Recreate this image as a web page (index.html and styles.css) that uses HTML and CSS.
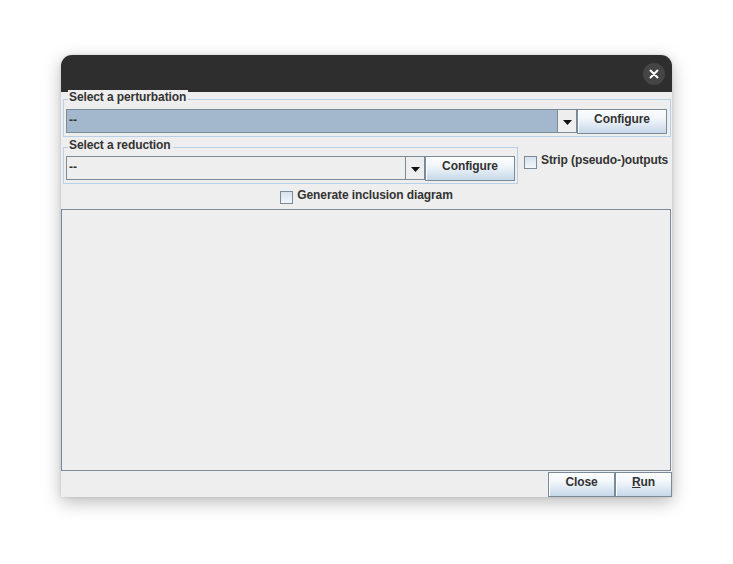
FILE: index.html
```html
<!DOCTYPE html>
<html>
<head>
<meta charset="utf-8">
<link rel="stylesheet" href="styles.css">
</head>
<body>
<div class="window">
  <div class="titlebar">
    <div class="close-btn">
      <svg width="10" height="10" viewBox="0 0 10 10"><path d="M1.5 1.5 L8.5 8.5 M8.5 1.5 L1.5 8.5" stroke="#ffffff" stroke-width="2" stroke-linecap="round"/></svg>
    </div>
  </div>
  <div class="content">
    <div class="group group-wide">
      <span class="group-title">Select a perturbation</span>
      <div class="combo-row">
        <div class="combo combo-selected">
          <span class="combo-value">--</span>
          <span class="combo-arrow"><svg width="9" height="5" viewBox="0 0 9 5"><path d="M0 0 H9 L4.5 5 Z" fill="#111"/></svg></span>
        </div>
        <div class="btn btn-configure">Configure</div>
      </div>
    </div>
    <div class="row-two">
      <div class="group group-narrow">
        <span class="group-title">Select a reduction</span>
        <div class="combo-row">
          <div class="combo">
            <span class="combo-value">--</span>
            <span class="combo-arrow"><svg width="9" height="5" viewBox="0 0 9 5"><path d="M0 0 H9 L4.5 5 Z" fill="#111"/></svg></span>
          </div>
          <div class="btn btn-configure">Configure</div>
        </div>
      </div>
      <div class="check check-strip"><span class="check-box"></span><span class="check-label">Strip (pseudo-)outputs</span></div>
    </div>
    <div class="row-three">
      <div class="check"><span class="check-box"></span><span class="check-label">Generate inclusion diagram</span></div>
    </div>
    <div class="panel"></div>
    <div class="button-row">
      <div class="btn btn-close">Close</div>
      <div class="btn btn-run"><u>R</u>un</div>
    </div>
  </div>
</div>
</body>
</html>
```
FILE: styles.css
```css
* { box-sizing: border-box; }
html, body { margin: 0; padding: 0; background: #ffffff; }
body {
  font-family: "Liberation Sans", Arial, sans-serif;
  font-size: 12px;
  font-weight: bold;
  letter-spacing: -0.1px;
  color: #333333;
  width: 733px;
  height: 564px;
  overflow: hidden;
  padding-top: 55px;
  padding-left: 61px;
}
.window {
  width: 611px;
  height: 442px;
  background: #eeeeee;
  border-radius: 11px 11px 0 0;
  box-shadow: 0 5px 18px rgba(0,0,0,0.28), 0 0 3px rgba(0,0,0,0.12);
  display: flex;
  flex-direction: column;
}
.titlebar {
  height: 37px;
  background: #2e2e2e;
  border-radius: 11px 11px 0 0;
  display: flex;
  justify-content: flex-end;
  align-items: center;
  padding-right: 7px;
}
.close-btn {
  width: 22px;
  height: 22px;
  border-radius: 50%;
  background: #454545;
  display: flex;
  align-items: center;
  justify-content: center;
}
.close-btn svg { display: block; }
.content {
  display: flex;
  flex-direction: column;
  flex: 1;
}
.group {
  position: relative;
  border: 1px solid #b8cfe5;
  padding: 9px 3px 2px 2px;
}
.group-wide {
  margin: 7px 1px 0 2px;
  height: 38px;
}
.group-title {
  position: absolute;
  left: 4px;
  top: -10px;
  line-height: 14px;
  padding: 0 2px 0 1px;
  background: #eeeeee;
}
.combo-row {
  display: flex;
  align-items: flex-start;
  height: 25px;
}
.combo {
  flex: 1;
  height: 24px;
  display: flex;
  border: 1px solid #7a8a99;
  background: #eeeeee;
}
.combo-selected { background: #a3b8cc; }
.combo-value {
  flex: 1;
  padding-left: 2px;
  line-height: 20px;
  color: #333333;
}
.combo-arrow {
  width: 19px;
  border-left: 1px solid #7a8a99;
  background: #eeeeee;
  display: flex;
  align-items: center;
  justify-content: center;
  padding-top: 3px;
}
.combo-arrow svg { display: block; }
.btn {
  height: 25px;
  border: 1px solid #7a8a99;
  background: linear-gradient(to bottom, #fbfcfe 0%, #f3f7fb 35%, #dfe9f3 65%, #c6d8e9 100%);
  display: flex;
  align-items: center;
  justify-content: center;
  padding-bottom: 5px;
  color: #333333;
  box-shadow: inset 1px 1px 0 #ffffff;
}
.btn-configure { width: 90px; }
.row-two {
  display: flex;
  align-items: flex-start;
  margin-top: 10px;
  height: 37px;
}
.group-narrow {
  margin-left: 2px;
  width: 455px;
  height: 37px;
  padding: 8px 2px 2px 2px;
}
.check {
  display: flex;
  align-items: flex-start;
}
.check-strip {
  margin-left: 6px;
  margin-top: 6px;
}
.check-box {
  width: 13px;
  height: 13px;
  border: 1px solid #7a8a99;
  background: linear-gradient(to bottom, #d6e2ee, #f2f6fa);
  margin-top: 3px;
  margin-right: 4px;
  flex: none;
}
.check-label { line-height: 14px; }
.row-three {
  height: 25px;
  display: flex;
  justify-content: center;
  align-items: flex-start;
  padding-top: 4px;
}
.panel {
  height: 262px;
  margin-right: 1px;
  border: 1px solid #7a8a99;
  background: #eeeeee;
}
.button-row {
  margin-top: 1px;
  display: flex;
  justify-content: flex-end;
}
.btn-close { width: 67px; }
.btn-run { width: 57px; }
.btn-run u { text-decoration: underline; text-underline-offset: 1px; }
```
